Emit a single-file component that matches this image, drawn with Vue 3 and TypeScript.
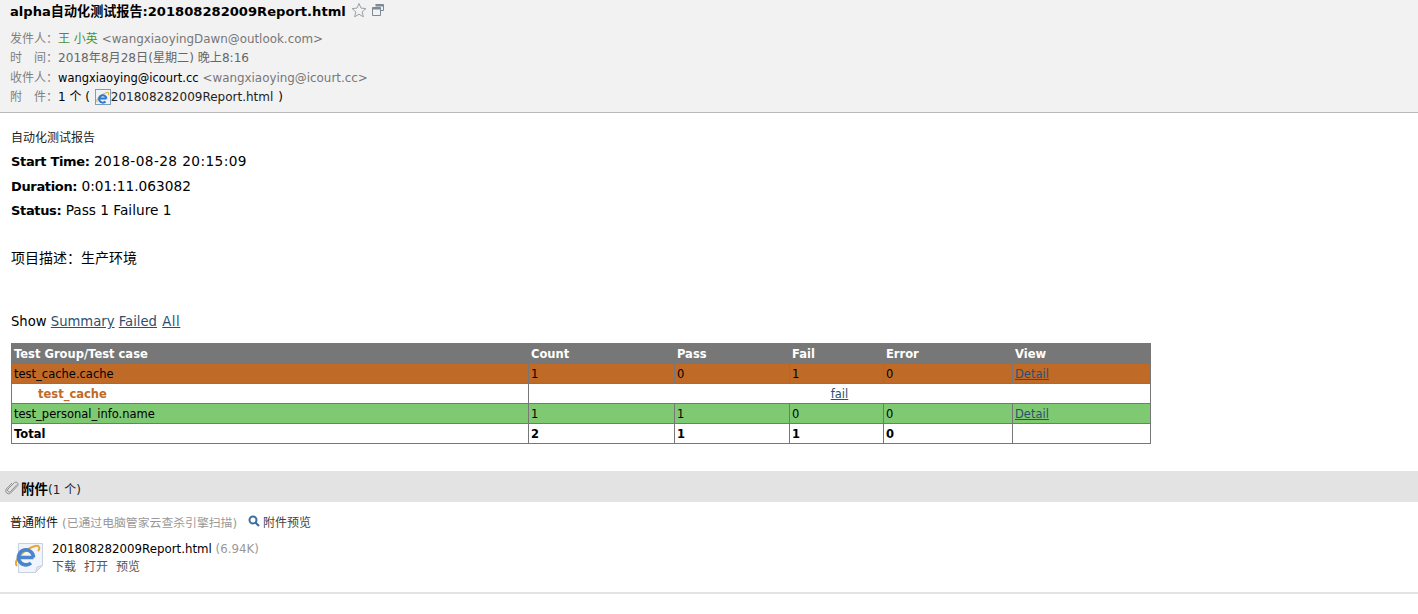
<script setup lang="ts">
type Row = {
  name: string;
  kind: string;
  cells: (string | number)[];
  link?: string;
};

const rows: Row[] = [
  { name: "test_cache.cache", kind: "failed", cells: [1, 0, 1, 0], link: "Detail" },
  { name: "test_personal_info.name", kind: "passed", cells: [1, 1, 0, 0], link: "Detail" },
];
const columns = [517, 146, 115, 94, 129, 138];
</script>

<template>
  <div class="mail">
    <header class="head">
      <div class="subject">
        <span>alpha自动化测试报告:201808282009Report.html</span>
        <svg class="star" width="16" height="16" viewBox="0 0 16 16">
          <path d="M8 1.500l2 4.600 4.900.5-3.700 3.300 1.100 4.900L8 12.200l-4.300 2.600 1.100-4.900L1.100 6.600l4.900-.5z" fill="none" stroke="#9aa0a6" />
        </svg>
        <svg class="popout" width="12" height="12" viewBox="0 0 12 12">
          <path d="M3.500.5h8v6h-3M.5 3.500h8v8h-8z" fill="none" stroke="#7c8a96" />
          <path d="M.5 4.500h8M3.500 1.500h8" stroke="#7c8a96" stroke-width="2" />
        </svg>
      </div>
      <div class="meta">
        <div class="line"><span class="label">发件人：</span><span class="green">王 小英</span> <span class="grey">&lt;wangxiaoyingDawn@outlook.com&gt;</span></div>
        <div class="line"><span class="label">时　间：</span><span class="date">2018年8月28日(星期二) 晚上8:16</span></div>
        <div class="line"><span class="label">收件人：</span><span class="to">wangxiaoying@icourt.cc</span> <span class="grey">&lt;wangxiaoying@icourt.cc&gt;</span></div>
        <div class="line">
          <span class="label">附　件：</span>1 个 (
          <svg class="tiny-ie" width="16" height="16" viewBox="0 0 16 16">
            <rect x=".5" y=".5" width="15" height="15" fill="#eef3fa" stroke="#7f9db9" />
            <path d="M2 13C1 10 6 5 12 3.500C14 3 14 5 13 6" fill="none" stroke="#e8b23c" stroke-width="1.200" />
            <path d="M5 9.500h6.500M11.500 9.500A3.700 3.700 0 1 0 10.500 12.500" fill="none" stroke="#2f78cc" stroke-width="2" />
          </svg><span class="file-link">201808282009Report.html</span> )
        </div>
      </div>
    </header>

    <main class="report">
      <p class="title">自动化测试报告</p>
      <p class="attr first"><b>Start Time:</b> <span class="stamp">2018-08-28 20:15:09</span></p>
      <p class="attr"><b>Duration:</b> 0:01:11.063082</p>
      <p class="attr"><b>Status:</b> Pass 1 Failure 1</p>
      <p class="desc">项目描述：生产环境</p>
      <p class="show">Show <a>Summary</a> <a>Failed</a> <a class="all">All</a></p>

      <table class="results">
        <colgroup>
          <col v-for="(w, i) in columns" :key="i" :style="{ width: w + 'px' }" />
        </colgroup>
        <thead>
          <tr>
            <th>Test Group/Test case</th>
            <th>Count</th>
            <th>Pass</th>
            <th>Fail</th>
            <th>Error</th>
            <th>View</th>
          </tr>
        </thead>
        <tbody>
          <tr :class="rows[0].kind">
            <td>{{ rows[0].name }}</td>
            <td v-for="(c, i) in rows[0].cells" :key="i">{{ c }}</td>
            <td><a>{{ rows[0].link }}</a></td>
          </tr>
          <tr>
            <td class="case">test_cache</td>
            <td colspan="5" class="mid"><a>fail</a></td>
          </tr>
          <tr :class="rows[1].kind">
            <td>{{ rows[1].name }}</td>
            <td v-for="(c, i) in rows[1].cells" :key="i">{{ c }}</td>
            <td><a>{{ rows[1].link }}</a></td>
          </tr>
          <tr class="total">
            <td>Total</td>
            <td>2</td>
            <td>1</td>
            <td>1</td>
            <td>0</td>
            <td></td>
          </tr>
        </tbody>
      </table>
    </main>

    <section class="attach">
      <div class="attach-bar">
        <svg class="clip" width="14" height="14" viewBox="0 0 14 14">
          <path d="M12 3.500L5.500 10.500a1.700 1.700 0 0 1-2.500-2.500L9.500 1.500a2.300 2.300 0 0 1 3.200 3.200L5.500 12.200A3 3 0 0 1 1.300 8L7 2" fill="none" stroke="#8f8f8f" />
        </svg>
        <b>附件</b><span>(1 个)</span>
      </div>
      <div class="attach-body">
        <div class="kind">
          <span class="kind-name">普通附件</span>
          <span class="scan">(已通过电脑管家云查杀引擎扫描)</span>
          <svg class="lens" width="12" height="12" viewBox="0 0 12 12">
            <circle cx="5" cy="5" r="3.500" fill="none" stroke="#3f6f9f" stroke-width="2" />
            <path d="M7.500 7.500L11 11" stroke="#3f6f9f" stroke-width="2.200" />
          </svg>
          <span class="preview">附件预览</span>
        </div>
        <div class="file">
          <svg class="ie" width="32" height="32" viewBox="0 0 32 32">
            <path d="M4.500 1.500h24v22l-7 7h-17z" fill="#f1f5fb" stroke="#c6d2e2" />
            <path d="M21.500 30.500l1.500-5.500 5.500-1.500z" fill="#dfe7f2" stroke="#c6d2e2" />
            <path d="M3 24C-1 20 8 8 21 4C26 2.500 26 7 24 9" fill="none" stroke="#e3a93a" stroke-width="2" />
            <path d="M6 15.500h13.500M19.500 15.500A7.500 7.500 0 1 0 17 21" fill="none" stroke="#4a84cc" stroke-width="3.600" />
          </svg>
          <div class="file-text">
            <div>201808282009Report.html <span class="size">(6.94K)</span></div>
            <div class="actions"><span>下载</span><span>打开</span><span>预览</span></div>
          </div>
        </div>
      </div>
    </section>
  </div>
</template>

<style scoped>
.mail {
  width: 1418px;
  height: 614px;
  overflow: hidden;
  background: #fff;
  color: #000;
  font-family: "DejaVu Sans", "Noto Sans CJK SC", sans-serif;
}
.head {
  height: 113px;
  box-sizing: border-box;
  background: #f2f2f2;
  border-bottom: 1px solid #b9b9b9;
  padding: 0 10px;
  font-size: 12px;
}
.subject {
  display: flex;
  align-items: center;
  height: 20px;
  font-size: 13.100px;
  font-weight: 700;
}
.star,
.popout {
  margin-left: 5px;
}
.meta {
  margin-top: 10px;
}
.line {
  height: 19.300px;
  line-height: 19px;
  white-space: nowrap;
}
.label {
  color: #808080;
}
.green {
  color: #4f8f2f;
}
.grey {
  color: #777;
  font-size: 11.900px;
}
.to {
  font-size: 11.500px;
}
.date {
  color: #666;
  font-size: 12.100px;
}
.tiny-ie {
  vertical-align: -4px;
  margin-left: 1px;
}
.file-link {
  color: #222;
  margin-right: 1px;
}
.report {
  padding: 0 11px;
  height: 358px;
  box-sizing: border-box;
}
.report p {
  margin: 0;
}
.title {
  padding-top: 18px;
  height: 36px;
  box-sizing: border-box;
  font-size: 12px;
  line-height: 14px;
  color: #222;
}
.attr {
  height: 24px;
  line-height: 24px;
  font-size: 13.700px;
}
.attr.first {
  height: 25px;
}
.attr b {
  font-size: 13px;
  letter-spacing: -0.35px;
}
.stamp {
  letter-spacing: 0.4px;
}
.desc {
  height: 48px;
  padding-top: 24px;
  box-sizing: border-box;
  line-height: 24px;
  font-size: 14px;
}
.show {
  margin-top: 40px !important;
  line-height: 24px;
  font-size: 13.200px;
}
.show .all {
  margin-left: 1px;
  letter-spacing: 0.6px;
}
a {
  color: #2e4f6f;
  text-decoration: underline;
}
.results {
  margin-top: 9px;
  table-layout: fixed;
  border-collapse: collapse;
  width: 1139px;
  font-size: 11.500px;
}
.results th,
.results td {
  height: 20px;
  box-sizing: border-box;
  padding: 0 2px;
  border: 1px solid #777;
  text-align: left;
  white-space: nowrap;
}
.results th {
  background: #777;
  color: #fff;
  font-weight: 700;
}
.failed td {
  background: #c06a28;
}
.passed td {
  background: #7fc972;
}
.results .case {
  padding-left: 26px;
  color: #c06a28;
  font-weight: 700;
}
.results .mid {
  text-align: center;
}
.total td {
  font-weight: 700;
}
.attach-bar {
  height: 31px;
  box-sizing: border-box;
  padding: 3px 0 0 5px;
  background: #e3e3e3;
  display: flex;
  align-items: center;
  font-size: 13.500px;
}
.clip {
  margin-right: 2px;
}
.attach-bar span {
  font-size: 12px;
  color: #223;
}
.attach-body {
  height: 92px;
  box-sizing: border-box;
  border-bottom: 2px solid #e3e3e3;
  padding: 11px 10px 0;
  font-size: 12px;
}
.kind {
  display: flex;
  align-items: center;
  height: 16px;
}
.kind-name {
  color: #111;
}
.scan {
  margin-left: 4px;
  color: #999;
  font-size: 11.850px;
}
.lens {
  margin-left: 11px;
}
.preview {
  margin-left: 3px;
  color: #444;
}
.file {
  display: flex;
  margin-top: 11px;
  padding-left: 4px;
}
.ie {
  margin-top: 2px;
}
.file-text {
  margin-left: 6px;
  font-size: 11.800px;
  line-height: 18px;
}
.size {
  color: #999;
}
.actions {
  display: flex;
  gap: 8px;
  font-size: 12px;
  color: #555;
}
</style>

<style>
html,
body {
  margin: 0;
  background: #fff;
}
</style>
